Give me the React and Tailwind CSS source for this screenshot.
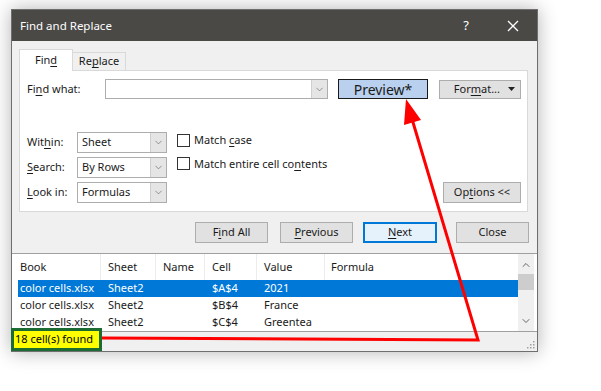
import { ChevronDown, ChevronUp } from "lucide-react";

const U = ({ children }) => <span className="underline underline-offset-2">{children}</span>;

const Combo = ({ value, width = "w-[90px]" }) => (
  <div className={`${width} h-[21px] flex border border-[#adadad] bg-white`}>
    <div className="flex-1 pl-[4px] flex items-center">{value}</div>
    <div className="w-[16px] bg-[#e5e5e5] border-l border-[#cfcfcf] flex items-center justify-center">
      <ChevronDown size={11} strokeWidth={1.5} className="text-[#6b6b6b]" />
    </div>
  </div>
);

const Check = ({ children }) => (
  <div className="flex items-center gap-[4px]">
    <div className="w-[13px] h-[13px] border border-[#333] bg-white" />
    <span>{children}</span>
  </div>
);

const Btn = ({ children, className = "" }) => (
  <div className={`h-[21px] flex items-center justify-center bg-[#e1e1e1] border border-[#adadad] ${className}`}>
    {children}
  </div>
);

const rows = [
  ["color cells.xlsx", "Sheet2", "", "$A$4", "2021", true],
  ["color cells.xlsx", "Sheet2", "", "$B$4", "France", false],
  ["color cells.xlsx", "Sheet2", "", "$C$4", "Greentea", false],
];

const Row = ({ cells, header, selected }) => (
  <div className={`flex ${header ? "h-[26px]" : "h-[17px]"} items-center ${selected ? "bg-[#0078d7] text-white" : ""}`}>
    <div className={`w-[83px] pl-[2px] h-full flex items-center ${header ? "border-r border-[#ececec]" : ""}`}>{cells[0]}</div>
    <div className={`w-[55px] pl-[7px] h-full flex items-center ${header ? "border-r border-[#ececec]" : ""}`}>{cells[1]}</div>
    <div className={`w-[49px] pl-[7px] h-full flex items-center ${header ? "border-r border-[#ececec]" : ""}`}>{cells[2]}</div>
    <div className={`w-[52px] pl-[7px] h-full flex items-center ${header ? "border-r border-[#ececec]" : ""}`}>{cells[3]}</div>
    <div className={`w-[68px] pl-[7px] h-full flex items-center ${header ? "border-r border-[#ececec]" : ""}`}>{cells[4]}</div>
    <div className="flex-1 pl-[6px] h-full flex items-center">{cells[5]}</div>
  </div>
);

export default function App() {
  return (
    <div className="relative w-[601px] h-[391px] bg-white overflow-hidden text-[11px] text-[#1a1a1a] font-['Noto_Sans',sans-serif]">
      {/* Dialog */}
      <div className="ml-[11px] mt-[9px] w-[527px] h-[343px] flex flex-col border border-[#6f6f6f] shadow-[0_0_18px_rgba(0,0,0,0.3)]">
        {/* Title bar */}
        <div className="h-[31px] bg-[#4a4946] flex items-center text-white text-[11.5px]">
          <span className="pl-[8px] flex-1">Find and Replace</span>
          <span className="text-[13px] mr-[38px]">?</span>
          <svg width="12" height="12" viewBox="0 0 12 12" className="mr-[18px]">
            <path d="M1 1 L11 11 M11 1 L1 11" stroke="white" strokeWidth="1.3" />
          </svg>
        </div>

        <div className="flex-1 bg-[#f0f0f0] flex flex-col">
          {/* Tabs */}
          <div className="mt-[8px] ml-[7px] flex items-end -mb-px relative z-10">
            <div className="w-[54px] h-[22px] bg-white border border-[#d9d9d9] border-b-0 flex items-center justify-center">
              Fin<U>d</U>
            </div>
            <div className="w-[54px] h-[19px] -ml-px border border-[#d9d9d9] flex items-center justify-center">
              Re<U>p</U>lace
            </div>
          </div>

          {/* Tab panel */}
          <div className="ml-[7px] w-[509px] h-[142px] bg-white border border-[#d9d9d9] flex flex-col">
            <div className="mt-[8px] flex items-center">
              <span className="w-[85px] pl-[7px]">
                Fi<U>n</U>d what:
              </span>
              <div className="w-[223px] h-[20px] flex border border-[#adadad] bg-white">
                <div className="flex-1" />
                <div className="w-[16px] bg-[#e5e5e5] border-l border-[#cfcfcf] flex items-center justify-center">
                  <ChevronDown size={11} strokeWidth={1.5} className="text-[#6b6b6b]" />
                </div>
              </div>
              <div className="ml-[10px] w-[90px] h-[20px] bg-[#b9d0ee] border border-[#1a1a1a] flex items-center justify-center text-[14px]">
                Preview*
              </div>
              <div className="ml-[11px] w-[82px] h-[19px] bg-[#e1e1e1] border border-[#adadad] flex items-center justify-end pr-[5px] gap-[8px]">
                <span>
                  For<U>m</U>at...
                </span>
                <svg width="7" height="4" viewBox="0 0 7 4">
                  <path d="M0 0 H7 L3.5 4 Z" fill="#222" />
                </svg>
              </div>
            </div>

            <div className="mt-[33px] flex">
              <div className="flex flex-col gap-[4px]">
                <div className="flex items-center">
                  <span className="w-[57px] pl-[7px]">
                    Wit<U>h</U>in:
                  </span>
                  <Combo value="Sheet" />
                </div>
                <div className="flex items-center">
                  <span className="w-[57px] pl-[7px]">
                    <U>S</U>earch:
                  </span>
                  <Combo value="By Rows" />
                </div>
                <div className="flex items-center">
                  <span className="w-[57px] pl-[7px]">
                    <U>L</U>ook in:
                  </span>
                  <Combo value="Formulas" />
                </div>
              </div>
              <div className="ml-[10px] flex flex-col gap-[7px]">
                <Check>
                  Match <U>c</U>ase
                </Check>
                <Check>
                  Match entire cell co<U>n</U>tents
                </Check>
              </div>
              <div className="flex-1 flex items-end justify-end pr-[6px]">
                <Btn className="w-[78px]">
                  Op<U>t</U>ions &lt;&lt;
                </Btn>
              </div>
            </div>
          </div>

          {/* Action buttons */}
          <div className="mt-[10px] flex">
            <Btn className="ml-[183px] w-[73px]">
              F<U>i</U>nd All
            </Btn>
            <Btn className="ml-[12px] w-[73px]">
              <U>P</U>revious
            </Btn>
            <div className="ml-[10px] w-[74px] h-[21px] flex items-center justify-center bg-[#e5f1fb] border-2 border-[#0078d7]">
              <U>N</U>ext
            </div>
            <Btn className="ml-[19px] w-[73px]">Close</Btn>
          </div>

          {/* Results list */}
          <div className="mt-[10px] h-[79px] bg-white border-t border-b border-[#a0a0a0] flex">
            <div className="flex-1 pl-[6px] flex flex-col">
              <Row header cells={["Book", "Sheet", "Name", "Cell", "Value", "Formula"]} />
              {rows.map((r, i) => (
                <Row key={i} selected={r[5]} cells={[r[0], r[1], r[2], r[3], r[4], ""]} />
              ))}
            </div>
            <div className="w-[16px] mr-[3px] bg-[#f0f0f0] flex flex-col items-center">
              <ChevronUp size={12} strokeWidth={1.8} className="text-[#555] mt-[5px]" />
              <div className="mt-[3px] w-full h-[16px] bg-[#cdcdcd]" />
              <div className="flex-1" />
              <ChevronDown size={12} strokeWidth={1.8} className="text-[#555] mb-[4px]" />
            </div>
          </div>

          {/* Status bar */}
          <div className="flex-1 flex items-end justify-end pr-[2px] pb-[2px]">
            <svg width="9" height="9" viewBox="0 0 9 9">
              {[
                [7, 1],
                [7, 4],
                [4, 4],
                [7, 7],
                [4, 7],
                [1, 7],
              ].map(([x, y], i) => (
                <rect key={i} x={x} y={y} width="1.5" height="1.5" fill="#a0a0a0" />
              ))}
            </svg>
          </div>
        </div>
      </div>

      {/* Annotation: found count */}
      <div className="absolute left-[11px] top-[328px] w-[91px] h-[23px] border-[3px] border-[#1c6b33] bg-[#ffff00] flex items-center pl-[1px] text-[11px] text-black whitespace-nowrap">
        18 cell(s) found
      </div>

      {/* Annotation: red arrow */}
      <svg className="absolute left-0 top-0 pointer-events-none" width="601" height="391" viewBox="0 0 601 391">
        <polyline points="102,338 300,339 478,340 412,119" fill="none" stroke="#ff0000" strokeWidth="3" strokeLinejoin="miter" />
        <polygon points="406,99 421,120 404,125" fill="#ff0000" />
      </svg>
    </div>
  );
}
